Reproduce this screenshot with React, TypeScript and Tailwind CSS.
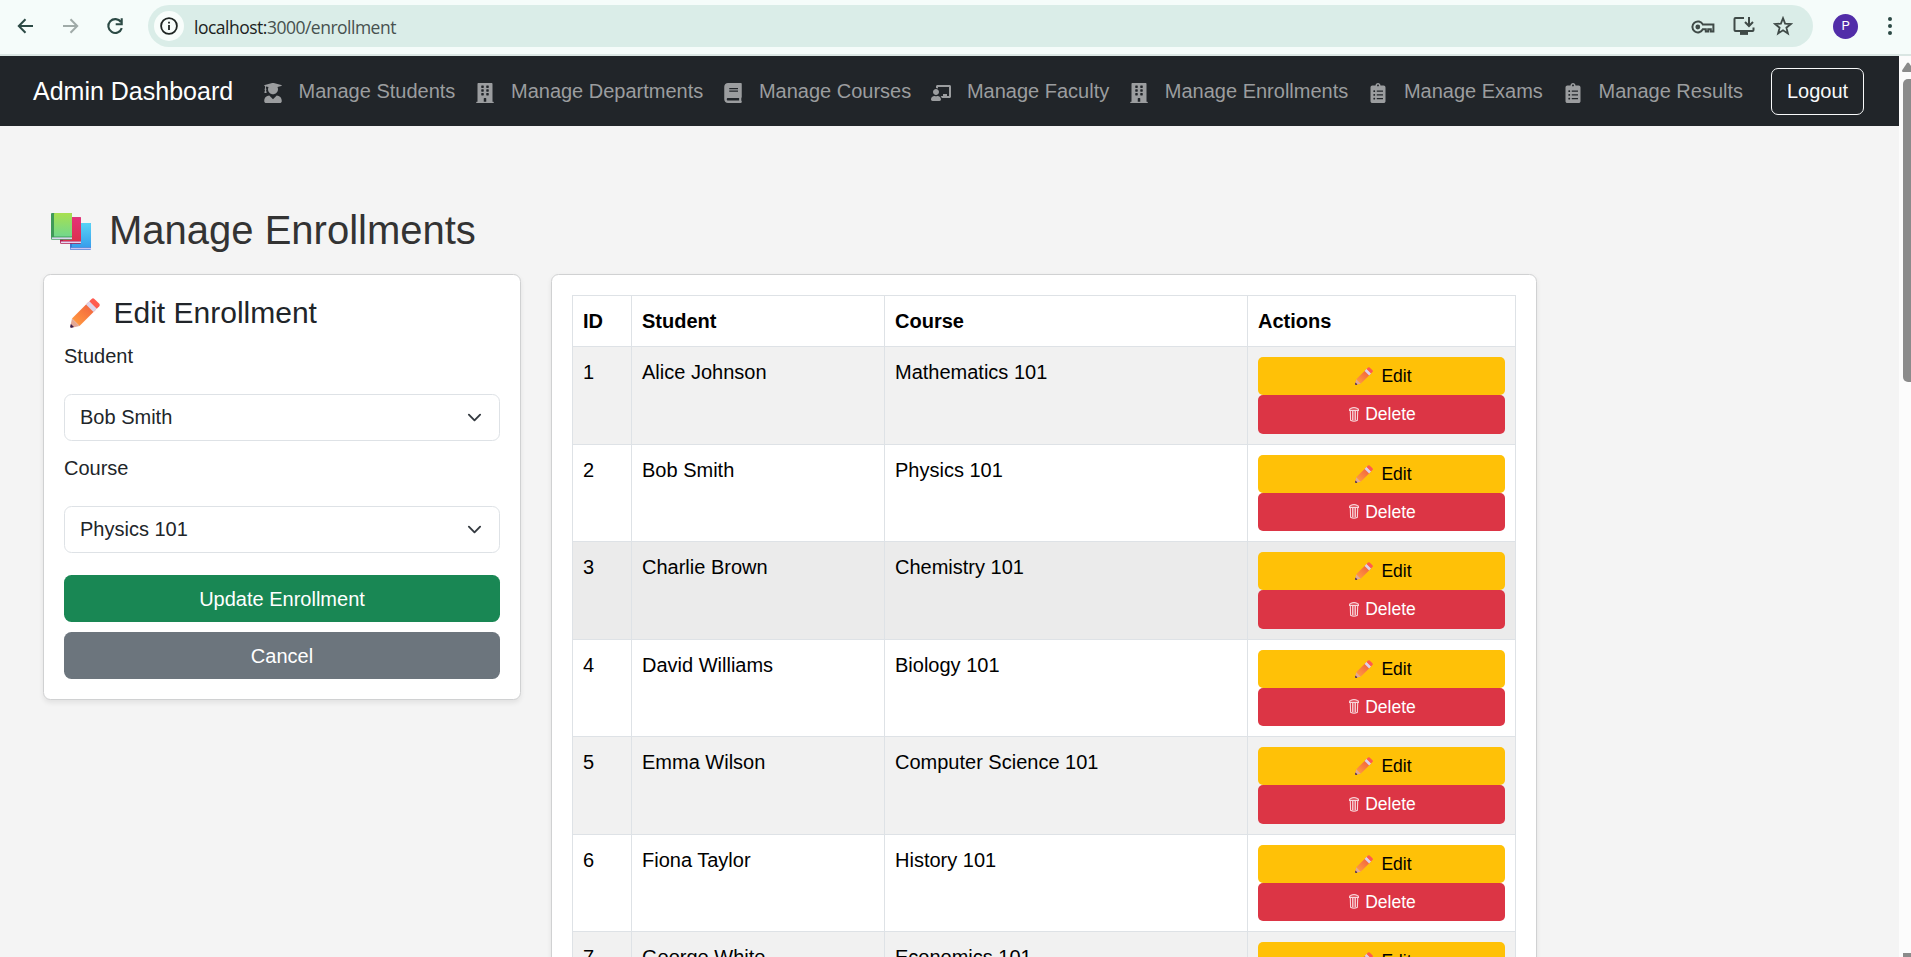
import React from "react";
import {
  FaUserGraduate,
  FaBuilding,
  FaBook,
  FaChalkboardTeacher,
  FaClipboardList,
} from "react-icons/fa";
import type { IconType } from "react-icons";

const navItems: { label: string; Icon: IconType }[] = [
  { label: "Manage Students", Icon: FaUserGraduate },
  { label: "Manage Departments", Icon: FaBuilding },
  { label: "Manage Courses", Icon: FaBook },
  { label: "Manage Faculty", Icon: FaChalkboardTeacher },
  { label: "Manage Enrollments", Icon: FaBuilding },
  { label: "Manage Exams", Icon: FaClipboardList },
  { label: "Manage Results", Icon: FaClipboardList },
];

const enrollments = [
  { id: 1, student: "Alice Johnson", course: "Mathematics 101" },
  { id: 2, student: "Bob Smith", course: "Physics 101" },
  { id: 3, student: "Charlie Brown", course: "Chemistry 101" },
  { id: 4, student: "David Williams", course: "Biology 101" },
  { id: 5, student: "Emma Wilson", course: "Computer Science 101" },
  { id: 6, student: "Fiona Taylor", course: "History 101" },
  { id: 7, student: "George White", course: "Economics 101" },
];

function Pencil({ className }: { className: string }) {
  return (
    <svg viewBox="0 0 30 30" className={className}>
      <defs>
        <linearGradient id="pencilBody" x1="0.9" y1="0.1" x2="0.2" y2="0.9">
          <stop offset="0" stopColor="#f1603f" />
          <stop offset="1" stopColor="#ff9640" />
        </linearGradient>
      </defs>
      <path d="M2 20.5 L18.5 4 L26 11.5 L9.5 28 Z" fill="url(#pencilBody)" />
      <path d="M2 20.5 L0.3 28.2 Q0 30 1.8 29.7 L9.5 28 Z" fill="#e3a795" />
      <path d="M0.9 26 L0.2 28.5 Q0 30 1.6 29.8 L4 29.1 Z" fill="#3c1f4e" />
      <path d="M16 6.5 L19.5 3 L27 10.5 L23.5 14 Z" fill="#dcd3ea" />
      <path d="M19.3 3.2 L21.6 0.9 Q23 -0.3 24.4 0.9 L29.1 5.6 Q30.4 7 29.1 8.4 L26.8 10.7 Z" fill="#ff5a50" />
    </svg>
  );
}

function Books() {
  return (
    <svg viewBox="0 0 40 37" className="mt-[3px] h-[37px] w-[40px]">
      <defs>
        <linearGradient id="bookGreen" x1="0" y1="0" x2="0" y2="1">
          <stop offset="0" stopColor="#a8e04f" />
          <stop offset="1" stopColor="#72d88c" />
        </linearGradient>
        <linearGradient id="bookRed" x1="0" y1="0" x2="0" y2="1">
          <stop offset="0" stopColor="#e5327a" />
          <stop offset="1" stopColor="#dc2f4d" />
        </linearGradient>
        <linearGradient id="bookBlue" x1="0" y1="0" x2="0" y2="1">
          <stop offset="0" stopColor="#58d3f6" />
          <stop offset="1" stopColor="#379eec" />
        </linearGradient>
      </defs>
      <rect x="19" y="10" width="21" height="27" rx="1" fill="#3d78d2" />
      <rect x="21" y="10" width="19" height="24.2" rx="0.6" fill="url(#bookBlue)" />
      <rect x="19.6" y="34.8" width="20.4" height="1.6" fill="#c9c6f4" />
      <rect x="9" y="4.2" width="21" height="26.6" rx="1" fill="#b01c50" />
      <rect x="12" y="4.2" width="18" height="23.8" rx="0.6" fill="url(#bookRed)" />
      <rect x="9.8" y="28.5" width="20.2" height="1.5" fill="#e6d5f0" />
      <rect x="0" y="0" width="21" height="26.8" rx="1" fill="#3f9a58" />
      <rect x="3" y="0" width="18" height="23.4" rx="0.4" fill="url(#bookGreen)" />
      <rect x="0.8" y="24.4" width="20.2" height="1.7" fill="#d9d6ef" />
    </svg>
  );
}

function Trash() {
  return (
    <svg viewBox="0 0 10 15" className="h-[15px] w-[10px]" fill="none" stroke="#f8d6da" strokeWidth="1.1">
      <path d="M0.5 3.4 Q0.4 2 1.6 1.6 Q5 -0.3 8.4 1.6 Q9.6 2 9.5 3.4 Z" />
      <path d="M1.3 3.6 L1.6 13.2 Q5 15.2 8.4 13.2 L8.7 3.6" />
      <path d="M3.5 4 V13.4 M5 4 V13.6 M6.5 4 V13.4" strokeWidth="0.9" />
    </svg>
  );
}

function BrowserBar() {
  return (
    <header className="flex h-14 w-full items-start border-b-2 border-[#dae6e3] bg-[#f5fcfa] text-[#2c4a45]">
      <div className="flex h-[52px] w-[148px] items-center pl-4">
        <svg viewBox="0 0 20 20" className="h-5 w-5" fill="none" stroke="currentColor" strokeWidth="2">
          <path d="M17 10H3M9.5 3.2 2.8 10l6.7 6.8" />
        </svg>
        <svg viewBox="0 0 20 20" className="ml-[25px] h-5 w-5 text-[#a0aba8]" fill="none" stroke="currentColor" strokeWidth="2">
          <path d="M2 10h14M9.5 3.2l6.7 6.8-6.7 6.8" />
        </svg>
        <svg viewBox="0 0 20 20" className="ml-6 h-5 w-5" fill="none" stroke="currentColor" strokeWidth="2.1">
          <path d="M16 6.2A6.9 6.9 0 1 0 16.8 12.2M16.7 2.2v6h-6" />
        </svg>
      </div>
      <div className="mt-[5px] flex h-[42px] w-[1665px] items-center rounded-full bg-[#daede8] pl-1.5">
        <div className="flex h-[30px] w-[30px] items-center justify-center rounded-full bg-[#f8fdfb] text-[#1f2523]">
          <svg viewBox="0 0 18 18" className="h-[18px] w-[18px]" fill="none" stroke="currentColor" strokeWidth="1.8">
            <circle cx="9" cy="9" r="7.9" />
            <path d="M9 8v5M9 4.8v1.8" />
          </svg>
        </div>
        <div className="mt-0.5 ml-[10px] font-['Open_Sans',sans-serif] text-[17.5px] tracking-[-0.5px] text-[#47514f]">
          <span className="text-[#1c2321]">localhost:</span>3000/enrollment
        </div>
        <div className="mr-[20px] ml-auto flex items-center gap-[18px] text-[#3f4a47]">
          <svg viewBox="0 0 24 14" className="mt-[2px] h-[14px] w-6" fill="none" stroke="currentColor" strokeWidth="2">
            <path d="M11.8 4.4H22.4V11.6H19.8V9.2H17.2V11.6H14.8V9.2H11.9A5.5 5.5 0 1 1 11.8 4.4Z" />
            <circle cx="6.8" cy="7" r="2.4" fill="currentColor" stroke="none" />
          </svg>
          <svg viewBox="0 0 22 20" className="h-5 w-[22px]" fill="none" stroke="currentColor" strokeWidth="2">
            <path d="M11 2H2.5Q1.5 2 1.5 3V14Q1.5 15 2.5 15H19.5Q20.5 15 20.5 14V11.5" />
            <path d="M16 1V9.5M12 6l4 4 4-4" />
            <path d="M7 17.4h8" strokeWidth="3" />
          </svg>
          <svg viewBox="0 0 20 20" className="h-5 w-5" fill="none" stroke="currentColor" strokeWidth="1.8">
            <path d="M10 2.2l2.1 5.4 5.8.4-4.5 3.7 1.5 5.7L10 14.2l-4.9 3.2 1.5-5.7L2.1 8l5.8-.4Z" />
          </svg>
        </div>
      </div>
      <div className="flex h-[52px] items-center pl-5">
        <div className="flex h-[25px] w-[25px] items-center justify-center rounded-full bg-[#512da8] font-['Roboto',sans-serif] text-[13px] text-white">
          P
        </div>
        <svg viewBox="0 0 4 18" className="ml-[30px] h-[18px] w-1" fill="currentColor">
          <circle cx="2" cy="2" r="2" />
          <circle cx="2" cy="9" r="2" />
          <circle cx="2" cy="16" r="2" />
        </svg>
      </div>
    </header>
  );
}

function NavBar() {
  return (
    <nav className="flex h-[70px] shrink-0 items-center bg-[#212529] pl-[33px]">
      <div className="w-[230px] pb-px text-[25px] leading-[38px] whitespace-nowrap text-white">Admin Dashboard</div>
      <ul className="flex gap-[20.1px]">
        {navItems.map(({ label, Icon }) => (
          <li key={label} className="flex items-center gap-[15.56px] leading-[30px] whitespace-nowrap text-[#9b9d9f]">
            <Icon className="mt-[3px] h-5 w-5" />
            <span className="pb-px">{label}</span>
          </li>
        ))}
      </ul>
      <button className="ml-[28px] h-[47px] w-[93px] rounded-[7px] border border-[#f8f9fa] pb-px text-[#f8f9fa]">
        Logout
      </button>
    </nav>
  );
}

function SelectField({ label, value }: { label: string; value: string }) {
  return (
    <div className="flex flex-col">
      <label className="h-[30px] leading-[30px]">{label}</label>
      <button className="mt-[23px] flex h-[47px] items-center justify-between rounded-[7.5px] border border-[#dee2e6] bg-white pr-[17px] pb-px pl-[15px]">
        {value}
        <svg viewBox="0 0 16 16" className="h-[15px] w-[15px]" fill="none" stroke="#343a40" strokeWidth="2" strokeLinecap="round" strokeLinejoin="round">
          <path d="m2 5 6 6 6-6" />
        </svg>
      </button>
    </div>
  );
}

function EditPanel() {
  return (
    <section className="flex h-[426px] w-[478px] flex-col rounded-[7.5px] border border-[#d0d1d2] bg-white px-5 pt-5 shadow-[0_2.5px_5px_rgba(0,0,0,0.075)]">
      <h2 className="flex h-9 items-center text-[30px] leading-9">
        <Pencil className="mb-px ml-[6px] h-[30px] w-[30px]" />
        <span className="ml-[13.5px]">Edit Enrollment</span>
      </h2>
      <div className="mt-[10px] flex flex-col gap-3">
        <SelectField label="Student" value="Bob Smith" />
        <SelectField label="Course" value="Physics 101" />
      </div>
      <button className="mt-[22px] h-[47px] rounded-[7.5px] bg-[#198754] text-white">Update Enrollment</button>
      <button className="mt-[10px] h-[47px] rounded-[7.5px] bg-[#6c757d] text-white">Cancel</button>
    </section>
  );
}

const rowFill = (id: number) => (id === 3 ? "bg-[#ebebeb]" : id % 2 ? "bg-[#f1f1f1]" : "bg-white");

function EnrollmentTable() {
  return (
    <section className="w-[986px] rounded-[7.5px] border border-[#d0d1d2] bg-white p-5 shadow-[0_2.5px_5px_rgba(0,0,0,0.075)]">
      <table className="w-[944px] table-fixed border-collapse text-left text-black">
        <colgroup>
          <col className="w-[59px]" />
          <col className="w-[253px]" />
          <col className="w-[363px]" />
          <col className="w-[268px]" />
        </colgroup>
        <thead>
          <tr className="h-[51px]">
            {["ID", "Student", "Course", "Actions"].map((h) => (
              <th key={h} className="border border-[#dee2e6] px-[10px] font-bold">
                {h}
              </th>
            ))}
          </tr>
        </thead>
        <tbody>
          {enrollments.map((e) => (
            <tr key={e.id} className={`h-[97.5px] align-top ${rowFill(e.id)}`}>
              <td className="border border-[#dee2e6] px-[10px] pt-[10px] leading-[30px]">{e.id}</td>
              <td className="border border-[#dee2e6] px-[10px] pt-[10px] leading-[30px]">{e.student}</td>
              <td className="border border-[#dee2e6] px-[10px] pt-[10px] leading-[30px]">{e.course}</td>
              <td className="border border-[#dee2e6] px-[10px] pt-[10px]">
                <div className="flex flex-col text-[17.5px] leading-[26px]">
                  <button className="flex h-[38px] items-center justify-center rounded-[5px] bg-[#ffc107] pl-[4px] text-black">
                    <Pencil className="mr-[8px] h-[18px] w-[18px]" />
                    Edit
                  </button>
                  <button className="flex h-[38.5px] items-center justify-center rounded-[5px] bg-[#dc3545] pl-[2px] text-white">
                    <span className="mr-[6px]">
                      <Trash />
                    </span>
                    Delete
                  </button>
                </div>
              </td>
            </tr>
          ))}
        </tbody>
      </table>
    </section>
  );
}

function Scrollbar() {
  return (
    <aside className="flex w-3 shrink-0 flex-col items-end overflow-hidden bg-[#fcfcfc]">
      <svg viewBox="0 0 9 10" className="mt-[6px] h-[10px] w-[9px]" fill="#8b8b8b">
        <path d="M0 8.5 5 1Q6 0 7 1L9 4V10H1Q0 10 0 8.5Z" />
      </svg>
      <div className="mt-[7px] h-[303px] w-2 rounded-l-[5px] bg-[#8b8b8b]" />
      <div className="mt-auto h-1 w-2 bg-[#8b8b8b]" />
    </aside>
  );
}

export default function App() {
  return (
    <div className="flex h-[957px] w-[1911px] flex-col overflow-hidden bg-[#f4f4f4] font-['Liberation_Sans',Arial,sans-serif] text-[20px] text-[#212529]">
      <BrowserBar />
      <div className="flex min-h-0 flex-1">
        <div className="flex min-w-0 flex-1 flex-col overflow-hidden">
          <NavBar />
          <main className="min-h-0 flex-1 pt-[80px] pl-[43px]">
            <h1 className="flex h-12 items-center pl-2 text-[40px] leading-[48px] text-[#333333]">
              <Books />
              <span className="ml-[18px]">Manage Enrollments</span>
            </h1>
            <div className="mt-5 flex items-start gap-[30px]">
              <EditPanel />
              <EnrollmentTable />
            </div>
          </main>
        </div>
        <Scrollbar />
      </div>
    </div>
  );
}
